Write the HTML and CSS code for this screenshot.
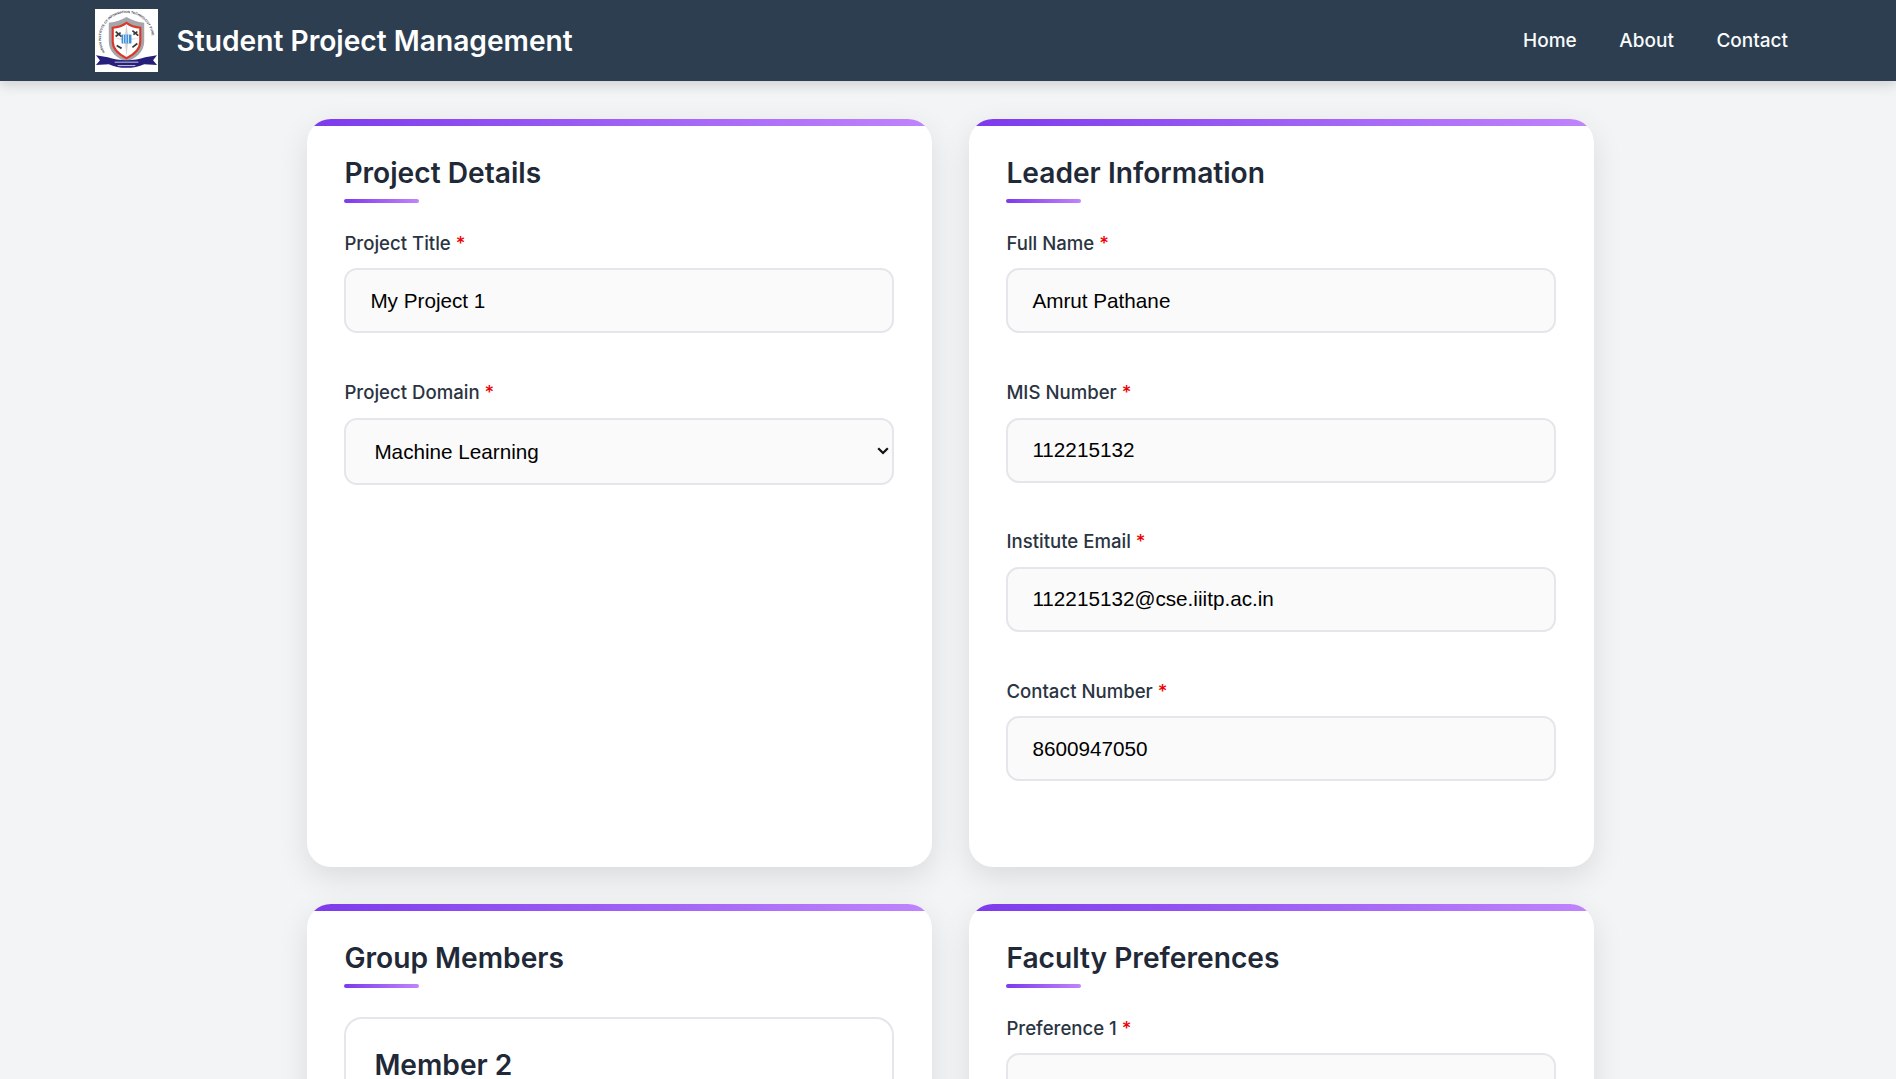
FILE: index.html
```html
<!DOCTYPE html>
<html lang="en">
<head>
<meta charset="utf-8">
<title>Student Project Management</title>
<link rel="stylesheet" href="styles.css">
</head>
<body>
<header class="topbar">
  <div class="brand">
    <svg class="logo" viewBox="0 0 64 64" role="img" aria-label="Institute crest">
      <defs>
        <path id="crest-ring" d="M10.100 44 A26 26 0 1 1 53.900 44"/>
      </defs>
      <rect width="64" height="64" fill="#fff"/>
      <text class="logo-ring"><textPath href="#crest-ring">INDIAN INSTITUTE OF INFORMATION TECHNOLOGY PUNE</textPath></text>
      <path d="M32 8 C37 11 43 13 50 14 V33 C50 44 41 50 32 54 C23 50 14 44 14 33 V14 C21 13 27 11 32 8 Z" fill="#a6a6aa"/>
      <path d="M32 14 C36 17 41 18.500 46 19 V33 C46 41 38 47 32 50 C26 47 18 41 18 33 V19 C23 18.500 28 17 32 14 Z" fill="#fff" stroke="#d8392b" stroke-width="2.200"/>
      <path d="M32 15 L34 30 L32 49 L30 30 Z M19 30 L45 30 L32 32 Z" fill="#d4d4d8"/>
      <path d="M21 23 L27 28 M21 28 L26 24 M38 22 L44 27 M39 26 L43 23 M38 39 L43 35 M22 37 L27 40" stroke="#3a3a3a" stroke-width="1.800"/>
      <rect x="27" y="26" width="10" height="9" fill="#3f8fd8"/>
      <path d="M29 26 V35 M31.500 26 V35 M34 26 V35" stroke="#fff" stroke-width=".8"/>
      <path d="M1 47 L13 49 C24 53 40 53 51 49 L63 47 L59 52 L63 57 L50 56 C40 61 24 61 14 56 L1 57 L5 52 Z" fill="#27207a"/>
      <path d="M20 54 H44 M23 57.500 H41" stroke="#c9c9e4" stroke-width="1"/>
    </svg>
    <span class="brand-name">Student Project Management</span>
  </div>
  <nav class="nav">
    <a class="nav-link" href="#">Home</a>
    <a class="nav-link" href="#">About</a>
    <a class="nav-link" href="#">Contact</a>
  </nav>
</header>
<main class="grid">
  <section class="card">
    <h2 class="card-title">Project Details</h2>
    <div class="field">
      <label class="label">Project Title <span class="req">*</span></label>
      <input class="control" type="text" value="My Project 1">
    </div>
    <div class="field">
      <label class="label">Project Domain <span class="req">*</span></label>
      <select class="control control-select"><option>Machine Learning</option></select>
    </div>
  </section>
  <section class="card">
    <h2 class="card-title">Leader Information</h2>
    <div class="field">
      <label class="label">Full Name <span class="req">*</span></label>
      <input class="control" type="text" value="Amrut Pathane">
    </div>
    <div class="field">
      <label class="label">MIS Number <span class="req">*</span></label>
      <input class="control" type="text" value="112215132">
    </div>
    <div class="field">
      <label class="label">Institute Email <span class="req">*</span></label>
      <input class="control" type="text" value="112215132@cse.iiitp.ac.in">
    </div>
    <div class="field">
      <label class="label">Contact Number <span class="req">*</span></label>
      <input class="control" type="text" value="8600947050">
    </div>
  </section>
  <section class="card">
    <h2 class="card-title">Group Members</h2>
    <div class="member">
      <h3 class="member-title">Member 2</h3>
    </div>
  </section>
  <section class="card">
    <h2 class="card-title">Faculty Preferences</h2>
    <div class="field">
      <label class="label">Preference 1 <span class="req">*</span></label>
      <input class="control" type="text">
    </div>
  </section>
</main>
</body>
</html>
```
FILE: styles.css
```css
* { box-sizing: border-box; }
html, body { margin: 0; padding: 0; }
body {
  background: #f3f4f6;
  font-family: Inter, "Liberation Sans", sans-serif;
  color: #1f2937;
  height: 1079px;
  overflow: hidden;
}
.topbar {
  height: 81px;
  background: #2c3e50;
  box-shadow: 0 4px 12px rgba(0, 0, 0, 0.15);
  display: flex;
  align-items: center;
  justify-content: space-between;
  padding: 0 108px 0 95px;
  position: relative;
  z-index: 2;
}
.brand { display: flex; align-items: center; gap: 18.500px; }
.logo { width: 63px; height: 63px; display: block; }
.logo-ring { font-family: "Liberation Sans", sans-serif; font-size: 3.300px; font-weight: 700; fill: #3c3c48; }
.brand-name { color: #fff; font-size: 28.160px; font-weight: 600; }
.nav { display: flex; gap: 42.500px; }
.nav-link { color: #f9fafb; font-size: 19px; font-weight: 500; text-decoration: none; }
.grid {
  display: grid;
  grid-template-columns: 625px 625px;
  gap: 37px;
  justify-content: center;
  padding: 38px 0 37px;
  margin-left: 5px;
}
.card {
  position: relative;
  overflow: hidden;
  background: #fff;
  border-radius: 24px;
  padding: 36px 37.900px 38px 37.400px;
  box-shadow: 0 10px 30px rgba(0, 0, 0, 0.1);
}
.card::before {
  content: "";
  position: absolute;
  top: 0;
  left: 0;
  right: 0;
  height: 7px;
  background: linear-gradient(90deg, #7c3aed, #c084fc);
}
.card-title {
  position: relative;
  margin: 0 0 28.800px;
  font-size: 28.160px;
  font-weight: 600;
  line-height: 36px;
  padding-bottom: 12px;
}
.card-title::after {
  content: "";
  position: absolute;
  left: 0;
  bottom: 0;
  width: 75px;
  height: 3.600px;
  border-radius: 2px;
  background: linear-gradient(90deg, #7c3aed, #c084fc);
}
.field { margin-bottom: 47.700px; }
.label { display: block; color: #2a3442; font-size: 18.600px; font-weight: 500; line-height: 22px; margin-bottom: 14.600px; }
.req { color: #ef0000; }
.control {
  display: block;
  width: 100%;
  height: 65px;
  padding: 0 24px;
  border: 2px solid #e5e5ec;
  border-radius: 13px;
  background: #fafafa;
  color: #000;
  font-family: "Liberation Sans", Arial, sans-serif;
  font-size: 20.700px;
}
.control-select {
  height: 67px;
  padding-left: 28px;
  appearance: none;
  background-image: url("data:image/svg+xml,%3Csvg xmlns='http://www.w3.org/2000/svg' viewBox='0 0 12 8'%3E%3Cpath d='M1.200 1.200 L6 6 L10.800 1.200' fill='none' stroke='%23111' stroke-width='2.200'/%3E%3C/svg%3E");
  background-repeat: no-repeat;
  background-size: 12px 8px;
  background-position: right 3.500px center;
}
.member {
  border: 2px solid #e5e5ec;
  border-radius: 18px;
  padding: 28px 28px 26px;
  background: #fff;
}
.member-title { margin: 0; font-size: 28.160px; font-weight: 600; line-height: 36px; }
```
